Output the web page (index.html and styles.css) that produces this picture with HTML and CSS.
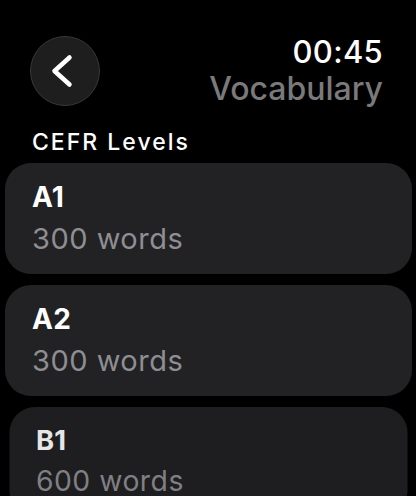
FILE: index.html
```html
<!DOCTYPE html>
<html>
<head>
<meta charset="utf-8">
<link rel="stylesheet" href="styles.css">
</head>
<body>
<div class="screen">
  <header class="header">
    <button class="back" aria-label="Back">
      <svg width="70" height="70" viewBox="0 0 70 70"><path d="M39.5 21.5 L24.5 35 L39.5 48.5" fill="none" stroke="#fff" stroke-width="4.5" stroke-linecap="round" stroke-linejoin="round"/></svg>
    </button>
    <div class="titles">
      <div class="time">00:45</div>
      <div class="title">Vocabulary</div>
    </div>
  </header>
  <div class="section">CEFR Levels</div>
  <div class="list">
    <div class="card"><div class="level">A1</div><div class="count">300 words</div></div>
    <div class="card"><div class="level">A2</div><div class="count">300 words</div></div>
    <div class="card card-far"><div class="level">B1</div><div class="count">600 words</div></div>
  </div>
</div>
</body>
</html>
```
FILE: styles.css
```css
html, body {
  margin: 0;
  padding: 0;
  background: #000;
  width: 416px;
  height: 496px;
  overflow: hidden;
  font-family: Inter, "Noto Sans", sans-serif;
  color: #fff;
}
.screen {
  padding-top: 36px;
}
.header {
  display: flex;
  justify-content: space-between;
  align-items: flex-start;
  padding: 0 33px 0 30px;
}
.back {
  width: 70px;
  height: 70px;
  border-radius: 50%;
  background: #1e1e1f;
  border: 1.5px solid #383839;
  box-sizing: border-box;
  padding: 0;
  margin: 0;
  display: flex;
  align-items: center;
  justify-content: center;
}
.back svg { display: block; margin: -1.5px; }
.titles {
  display: flex;
  flex-direction: column;
  align-items: flex-end;
}
.time {
  font-size: 31px;
  line-height: 36px;
  font-weight: 500;
  letter-spacing: 0.3px;
  margin-top: -2.3px;
}
.title {
  font-size: 32px;
  line-height: 38px;
  font-weight: 500;
  color: #7a7a7a;
  margin-top: 0.5px;
}
.section {
  font-size: 23px;
  line-height: 28px;
  font-weight: 500;
  letter-spacing: 2px;
  padding-left: 32px;
  margin-top: 20px;
}
.list {
  display: flex;
  flex-direction: column;
  gap: 11px;
  padding: 7px 4px 0 5px;
}
.card {
  background: #222224;
  border-radius: 26px;
  padding: 13px 0 13px 27px;
  height: 111px;
  box-sizing: border-box;
}
.level {
  font-size: 28px;
  line-height: 42px;
  font-weight: 700;
  letter-spacing: 0.3px;
}
.count {
  font-size: 29px;
  line-height: 42px;
  font-weight: 400;
  letter-spacing: 0.5px;
  color: #8e8e93;
}
.card-far {
  transform: scale(0.978);
  transform-origin: top center;
  opacity: 0.9;
}
```
